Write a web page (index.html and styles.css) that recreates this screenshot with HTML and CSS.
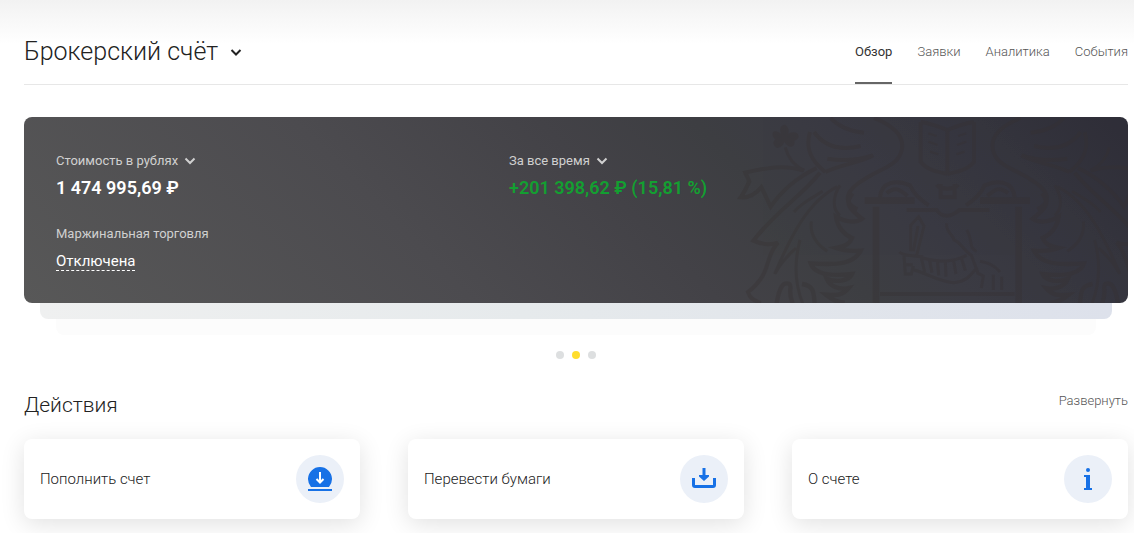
FILE: index.html
```html
<!DOCTYPE html>
<html lang="ru">
<head>
    <meta charset="UTF-8">
    <meta name="viewport" content="width=device-width, initial-scale=1.0">
    <title>Брокерский счёт</title>
    <link rel="stylesheet" href="styles.css">
</head>
<body>
    <!-- Header -->
    <header class="header">
        <h1 class="title">
            <button class="title-button" type="button">
                Брокерский счёт
                <svg class="chevron" width="12" height="8" viewBox="0 0 12 8"><path d="M1.500 2L6 6.500l4.500-4.500"/></svg>
            </button>
        </h1>
        <nav class="tabs">
            <a class="tab active" href="#overview">Обзор</a>
            <a class="tab" href="#orders">Заявки</a>
            <a class="tab" href="#analytics">Аналитика</a>
            <a class="tab" href="#events">События</a>
        </nav>
    </header>

    <!-- Account summary -->
    <section class="summary">
        <div class="summary-card">
            <svg class="emblem" viewBox="0 21 1224 558" aria-hidden="true">
                <defs>
                    <g id="wing">
                        <path stroke-width="12" d="M332 24c20 22 52 40 100 44M270 66c-12 40-6 80 46 120M282 66c36 50 90 54 140 42M322 146c50 8 94 4 136-10M316 186c50-24 106-28 144-50M462 24c50 20 90 50 84 92c-8 50-60 58-110 90c-60 34-70 70-24 92"/>
                        <path stroke-width="12" d="M300 188c-60 74-130 114-200 204c30 14 60 12 74 6c-44 46-14 88-90 148c6 20 18 24 38 34M252 182c-60-20-116-8-176 6l12 26c-8 20-16 34-26 48c24 2 44-8 62-30c10 18 16 34 28 58c40-58 84-90 138-116"/>
                        <path stroke-width="9" d="M196 112c8 34 26 54 56 70M360 226c-20 30-26 70 0 90M352 230c-90 46-140 150-188 262M240 390c-16 60-20 120 8 190M274 334c-6 44 18 70 48 90M222 306c20-26 50-40 86-62M166 490c20-40 46-60 62-76"/>
                        <path stroke-width="13" d="M398 250c-30 34 0 54 28 76c-20 14-50 10-78-6c4 30 24 54 48 64c-8 20-24 26-48 30c26 10 46 10 74 8c-20 40-70 44-150 38c10 30 50 40 124 32c-10 22-50 26-76 14c10 24 36 34 66 28c-20 24-40 22-68 20c18 14 30 22 56 24M170 580c8-50 20-66 38-58c10 8-6 20 10 58M246 522c40 6 34 30 38 58"/>
                        <path stroke-width="20" d="M434 272h150M468 290v289"/>
                        <path stroke-width="12" d="M480 262c4-48 50-54 90-36c10 24 28 42 56 60M500 250c24-22 40-12 62 8M602 36v120c20 24 50 30 80 36M602 36c24 4 52 12 80 24"/>
                        <path stroke-width="7" d="M625 70l25 8M625 95l28 10M630 125l25 8"/>
                    </g>
                </defs>
                <g class="emblem-lines">
                    <use href="#wing"/>
                    <use href="#wing" transform="translate(1364 0) scale(-1 1)"/>
                    <path stroke-width="12" d="M682 60v126M480 552h404M560 300h90c16 24 42 22 68 0h90M650 224c10 16 54 16 64 0M662 222v40h42v-40"/>
                    <path class="leaf" stroke-width="8" d="M192 84c-12-26-8-34 2-36c14 10 8 24-2 36zM192 84c-22-20-34-20-30-8c2 10 14 14 30 8zM192 84c-30 4-34 16-20 26c14-2 18-12 20-26zM192 84c22-18 40-16 40-4c-8 12-24 12-40 4zM192 84c12 30 28 24 28 14c0-10-12-12-28-14z"/>
                    <path stroke-width="9" d="M572 424v-78l24-26l16 28l-22 88M594 348l-14 76M538 426c10 10 50 14 72 14M552 438l4 54h18l6-24M556 464h22M604 444l10 42M628 448l8 40M652 450l4 46M676 454l2 46M700 448l8 44M724 444l12 38M582 480c40 10 70 34 120 38c40-4 50-24 70-46M606 444c50 12 90 14 134-8M680 340c-4 26 20 34 22 50c20 6 28 30 52 46l20 54l16 8l-6 36M740 360c20 30 4 54 30 64M780 454c20 4 40 8 60 32M820 494v46M845 500v40"/>
                </g>
            </svg>
            <div class="stat">
                <button class="stat-label" type="button">
                    Стоимость в рублях
                    <svg class="chevron" width="12" height="8" viewBox="0 0 12 8"><path d="M1.500 1.500L6 6l4.500-4.500"/></svg>
                </button>
                <div class="stat-value">1 474 995,69 ₽</div>
            </div>
            <div class="stat">
                <button class="stat-label" type="button">
                    За все время
                    <svg class="chevron" width="12" height="8" viewBox="0 0 12 8"><path d="M1.500 1.500L6 6l4.500-4.500"/></svg>
                </button>
                <div class="stat-value profit">+201 398,62 ₽ (15,81 %)</div>
            </div>
            <div class="stat">
                <div class="stat-label">Маржинальная торговля</div>
                <a class="margin-link" href="#margin">Отключена</a>
            </div>
        </div>
        <div class="layer layer-middle"></div>
        <div class="layer layer-back"></div>
        <div class="dots">
            <button class="dot" type="button" aria-label="1"></button>
            <button class="dot current" type="button" aria-label="2"></button>
            <button class="dot" type="button" aria-label="3"></button>
        </div>
    </section>

    <!-- Actions -->
    <section>
        <div class="actions-header">
            <h2 class="actions-title">Действия</h2>
            <button class="expand" type="button">Развернуть</button>
        </div>
        <div class="actions">
            <button class="action" type="button">
                Пополнить счет
                <span class="action-icon">
                    <svg width="24" height="24" viewBox="0 0 24 24">
                        <path fill="#1771e6" d="M3 20a12 12 0 1 1 18 0zM0 22h24v2H0z"/>
                        <path fill="none" stroke="#fff" stroke-width="2" d="M12 5v10M8.500 12l3.500 3.500l3.500-3.500"/>
                    </svg>
                </span>
            </button>
            <button class="action" type="button">
                Перевести бумаги
                <span class="action-icon">
                    <svg width="24" height="24" viewBox="0 0 24 24">
                        <path fill="#1771e6" d="M10.500 1h3v7H17v1.500L12 14L7 9.500V8h3.500z"/>
                        <path fill="none" stroke="#1771e6" stroke-width="3" d="M1.500 11v7q0 1.500 1.500 1.500h18q1.500 0 1.500-1.500v-7"/>
                    </svg>
                </span>
            </button>
            <button class="action" type="button">
                О счете
                <span class="action-icon">
                    <svg width="24" height="24" viewBox="0 0 24 24">
                        <circle fill="#1771e6" cx="12" cy="3" r="2"/>
                        <path fill="#1771e6" d="M8 8h6v13h2v2H8v-2h2V10H8z"/>
                    </svg>
                </span>
            </button>
        </div>
    </section>
</body>
</html>
```

FILE: styles.css
```css
* {
    box-sizing: border-box;
}
body {
    font-family: Roboto, Arial, sans-serif;
    margin: 0;
    padding: 0 6px 14px 24px;
    color: #333;
    background: #fff linear-gradient(#f2f2f2, #fff 44px) no-repeat;
}
h1, h2 {
    margin: 0;
    font-weight: 300;
    color: #222;
}
button {
    padding: 0;
    border: none;
    background: none;
    color: inherit;
    font: inherit;
    text-align: left;
    cursor: pointer;
}
a {
    color: inherit;
    text-decoration: none;
}
.chevron {
    fill: none;
    stroke: currentColor;
    stroke-width: 2;
}

/* Header */
.header {
    display: flex;
    justify-content: space-between;
    height: 85px;
    border-bottom: 1px solid #e7e7e7;
}
.title {
    padding-top: 36px;
    font-size: 25px;
    line-height: 32px;
}
.title-button {
    display: flex;
    align-items: center;
    gap: 12px;
}
.tabs {
    display: flex;
    gap: 25px;
}
.tab {
    padding-top: 42px;
    font-size: 13px;
    font-weight: 300;
    line-height: 20px;
    color: #555;
}
.tab.active {
    font-weight: 400;
    color: #333;
    border-bottom: 2px solid #666;
}

/* Account summary */
.summary {
    margin-top: 32px;
}
.summary-card {
    position: relative;
    display: grid;
    grid-template-columns: 453px 1fr;
    row-gap: 24px;
    padding: 32px;
    overflow: hidden;
    border-radius: 8px;
    color: #fff;
    background: linear-gradient(45deg, #585858, #4c4b4f 35%, #434247 54%, #3d3e42 66%, #3b3b43 74%, #35353e 88%, #2f2e38);
}
.emblem {
    position: absolute;
    top: 0;
    right: 0;
    height: 100%;
}
.emblem-lines {
    fill: none;
    stroke: #352f30;
    opacity: 0.3;
}
.emblem-lines .leaf {
    fill: #352f30;
}
.stat {
    position: relative;
}
.stat-label {
    display: flex;
    align-items: center;
    gap: 6px;
    margin-bottom: 5px;
    font-size: 13px;
    line-height: 24px;
    color: #d0d0d0;
}
.stat-value {
    font-size: 18px;
    font-weight: 600;
    line-height: 20px;
}
.profit {
    color: #139f31;
}
.margin-link {
    display: inline-block;
    font-size: 15px;
    line-height: 17px;
    border-bottom: 1px dashed #fff;
}
.layer {
    height: 16px;
    border-radius: 0 0 8px 8px;
}
.layer-middle {
    margin: 0 16px;
    background: linear-gradient(90deg, #eff0f0, #e6eaec 45%, #dde1eb);
}
.layer-back {
    margin: 0 32px;
    background: #fcfcfc;
}
.dots {
    display: flex;
    justify-content: center;
    gap: 8px;
    padding-top: 16px;
}
.dot {
    width: 8px;
    height: 8px;
    border-radius: 50%;
    background: #dddfe0;
}
.dot.current {
    background: #ffdd2d;
}

/* Actions */
.actions-header {
    display: flex;
    justify-content: space-between;
    align-items: flex-start;
    margin-top: 32px;
    height: 48px;
}
.actions-title {
    font-size: 21px;
    line-height: 28px;
}
.expand {
    font-size: 13px;
    font-weight: 300;
    line-height: 20px;
    color: #555;
}
.actions {
    display: grid;
    grid-template-columns: repeat(3, 1fr);
    gap: 48px;
}
.action {
    display: flex;
    justify-content: space-between;
    align-items: center;
    padding: 16px;
    border-radius: 8px;
    font-size: 15px;
    font-weight: 300;
    color: #222;
    background: #fff;
    box-shadow: 0 5px 25px rgba(0, 0, 0, 0.12);
}
.action-icon {
    display: flex;
    align-items: center;
    justify-content: center;
    width: 48px;
    height: 48px;
    border-radius: 50%;
    background: #ebf0f8;
}
```
